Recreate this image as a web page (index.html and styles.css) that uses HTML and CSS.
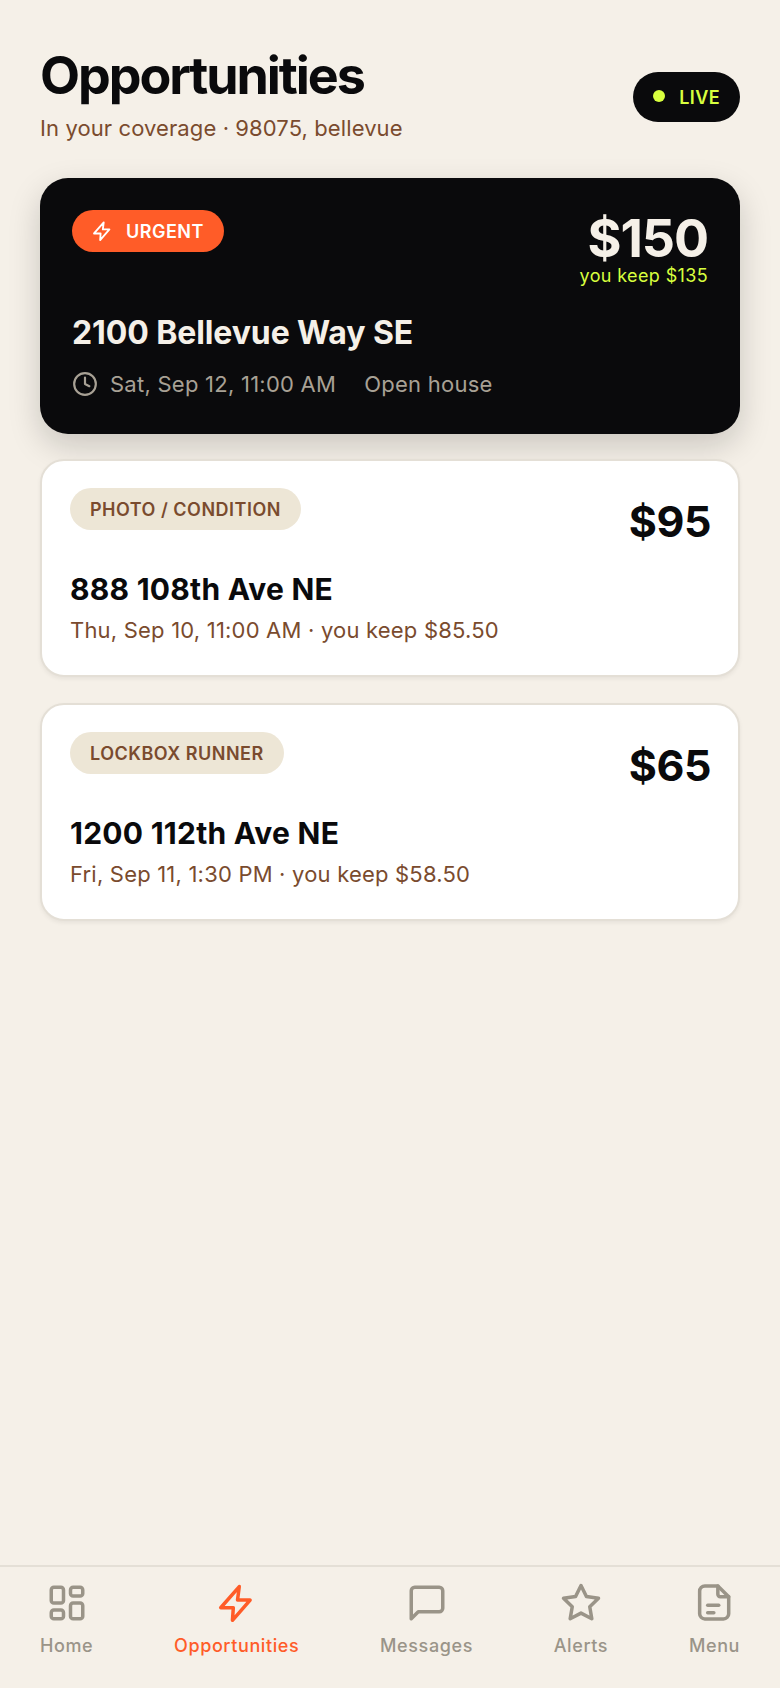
FILE: index.html
```html
<!DOCTYPE html>
<html lang="en">
<head>
<meta charset="utf-8">
<title>Opportunities</title>
<link rel="stylesheet" href="styles.css">
</head>
<body>
<div class="app">
  <main class="main">
    <header class="head">
      <div>
        <h1 class="title">Opportunities</h1>
        <p class="sub">In your coverage · 98075, bellevue</p>
      </div>
      <div class="live"><span class="dot"></span>LIVE</div>
    </header>

    <section class="hero">
      <div class="row">
        <span class="chip chip-urgent">
          <svg class="chip-icon" viewBox="0 0 24 24"><path d="M12.8 2.6 2.2 14.7H9.4L8.9 21.9 19 10.3H11.8Z"/></svg>
          URGENT
        </span>
        <div class="hero-pay">
          <div class="hero-price">$150</div>
          <div class="hero-keep">you keep $135</div>
        </div>
      </div>
      <h2 class="hero-addr">2100 Bellevue Way SE</h2>
      <div class="hero-meta">
        <svg class="clock" viewBox="0 0 24 24"><circle cx="12" cy="12" r="10"/><polyline points="12 6 12 12 16 14"/></svg>
        <span>Sat, Sep 12, 11:00 AM</span>
        <span class="hero-type">Open house</span>
      </div>
    </section>

    <section class="card">
      <div class="row">
        <span class="chip chip-plain">PHOTO / CONDITION</span>
        <div class="price">$95</div>
      </div>
      <h2 class="addr">888 108th Ave NE</h2>
      <p class="meta">Thu, Sep 10, 11:00 AM · you keep $85.50</p>
    </section>

    <section class="card">
      <div class="row">
        <span class="chip chip-plain">LOCKBOX RUNNER</span>
        <div class="price">$65</div>
      </div>
      <h2 class="addr">1200 112th Ave NE</h2>
      <p class="meta">Fri, Sep 11, 1:30 PM · you keep $58.50</p>
    </section>
  </main>

  <nav class="nav">
    <div class="tab">
      <svg class="tab-icon" viewBox="0 0 24 24"><rect x="3" y="3" width="7" height="9" rx="1.5"/><rect x="14" y="3" width="7" height="5" rx="1.5"/><rect x="14" y="12" width="7" height="9" rx="1.5"/><rect x="3" y="16" width="7" height="5" rx="1.5"/></svg>
      <span>Home</span>
    </div>
    <div class="tab tab-active">
      <svg class="tab-icon" viewBox="0 0 24 24"><path d="M13.3 2.6 2.7 14.7H9.9L9.4 21.9 19.5 10.3H12.3Z"/></svg>
      <span>Opportunities</span>
    </div>
    <div class="tab">
      <svg class="tab-icon" viewBox="0 0 24 24"><path d="M21 15a2 2 0 0 1-2 2H7l-4 4V5a2 2 0 0 1 2-2h14a2 2 0 0 1 2 2z"/></svg>
      <span>Messages</span>
    </div>
    <div class="tab">
      <svg class="tab-icon" viewBox="0 0 24 24"><polygon points="12 2 15.09 8.26 22 9.27 17 14.14 18.18 21.02 12 17.77 5.82 21.02 7 14.14 2 9.27 8.91 8.26"/></svg>
      <span>Alerts</span>
    </div>
    <div class="tab">
      <svg class="tab-icon" viewBox="0 0 24 24"><path d="M14.2 2.3H6.8a3 3 0 0 0-3 3V18.1a3 3 0 0 0 3 3H17.4a3 3 0 0 0 3-3V8.4Z"/><path d="M14.2 2.3V7a1.4 1.4 0 0 0 1.4 1.4H20.4"/><line x1="8.4" y1="13.3" x2="14.7" y2="13.3"/><line x1="8.4" y1="17.5" x2="11.9" y2="17.5"/></svg>
      <span>Menu</span>
    </div>
  </nav>
</div>
</body>
</html>
```

FILE: styles.css
```css
* { box-sizing: border-box; }

html, body { margin: 0; padding: 0; }

body {
  background: #f5f0e8;
  color: #0a0a0c;
  font-family: Inter, "Liberation Sans", sans-serif;
}

.app {
  height: 1688px;
  display: flex;
  flex-direction: column;
}

.main {
  flex: 1;
  padding: 50px 40px 0;
}

.head {
  display: flex;
  justify-content: space-between;
  align-items: center;
  margin-bottom: 34px;
}

.title {
  margin: 0;
  font-size: 52px;
  line-height: 52px;
  font-weight: 700;
  letter-spacing: -2.08px;
}

.sub {
  margin: 10px 0 0;
  font-size: 22px;
  line-height: 32px;
  letter-spacing: 0.1px;
  color: #7a4b2e;
}

.live {
  display: flex;
  align-items: center;
  gap: 14px;
  height: 50px;
  padding: 0 20px;
  border-radius: 25px;
  background: #0a0a0c;
  color: #d8ff3e;
  font-size: 18px;
  font-weight: 600;
  letter-spacing: 0.4px;
}

.dot {
  width: 12px;
  height: 12px;
  margin-top: -2px;
  border-radius: 50%;
  background: #d8ff3e;
}

.row {
  display: flex;
  justify-content: space-between;
  align-items: flex-start;
}

.hero {
  height: 256px;
  padding: 32px 32px 0;
  border-radius: 28px;
  background: #0a0a0c;
  color: #f5f0e8;
  box-shadow: 0 12px 32px rgba(10, 10, 12, 0.18);
}

.chip {
  display: inline-flex;
  align-items: center;
  height: 42px;
  padding: 0 20px;
  border-radius: 21px;
  font-size: 18px;
  font-weight: 600;
  letter-spacing: 0.5px;
}

.chip-urgent {
  gap: 12px;
  background: #ff5c28;
  color: #fff;
}

.chip-icon {
  width: 22px;
  height: 22px;
  fill: none;
  stroke: #fff;
  stroke-width: 2;
  stroke-linecap: round;
  stroke-linejoin: round;
}

.chip-plain {
  background: #ede6d6;
  color: #7a4b2e;
}

.hero-pay { text-align: right; }

.hero-price {
  margin-top: 3px;
  font-size: 52px;
  line-height: 52px;
  font-weight: 700;
  letter-spacing: -1.04px;
}

.hero-keep {
  font-size: 18px;
  line-height: 22px;
  letter-spacing: 0.36px;
  color: #d8ff3e;
}

.hero-addr {
  margin: 27px 0 0;
  font-size: 32px;
  line-height: 38px;
  font-weight: 700;
  letter-spacing: -0.1px;
}

.hero-meta {
  display: flex;
  align-items: center;
  gap: 12px;
  margin-top: 17px;
  font-size: 22px;
  line-height: 30px;
  letter-spacing: 0.25px;
  color: #a8a195;
}

.hero-type { margin-left: 16px; }

.clock {
  width: 26px;
  height: 26px;
  fill: none;
  stroke: #a8a195;
  stroke-width: 2;
  stroke-linecap: round;
  stroke-linejoin: round;
}

.card {
  height: 218px;
  margin-top: 25px;
  padding: 27px 27px 0 28px;
  border: 2px solid #e4dfd6;
  border-radius: 24px;
  background: #fff;
  box-shadow: 0 2px 4px rgba(10, 10, 12, 0.06);
}

.card + .card { margin-top: 26px; }

.price {
  margin-top: 10px;
  font-size: 43px;
  line-height: 46px;
  font-weight: 700;
  letter-spacing: -0.43px;
}

.addr {
  margin: 27px 0 0;
  font-size: 30px;
  line-height: 36px;
  font-weight: 700;
  letter-spacing: 0.25px;
}

.meta {
  margin: 8px 0 0;
  font-size: 22px;
  line-height: 30px;
  letter-spacing: 0.2px;
  color: #7a4b2e;
}

.nav {
  display: flex;
  justify-content: space-between;
  height: 123px;
  padding: 15px 40px 0;
  border-top: 2px solid #e4dfd6;
}

.tab {
  display: flex;
  flex-direction: column;
  align-items: center;
  gap: 10px;
  font-size: 18px;
  line-height: 24px;
  font-weight: 500;
  letter-spacing: 0.6px;
  color: #9a9488;
}

.tab-active {
  color: #ff5c28;
}

.tab-icon {
  width: 42px;
  height: 42px;
  fill: none;
  stroke: currentColor;
  stroke-width: 2;
  stroke-linecap: round;
  stroke-linejoin: round;
}
```
